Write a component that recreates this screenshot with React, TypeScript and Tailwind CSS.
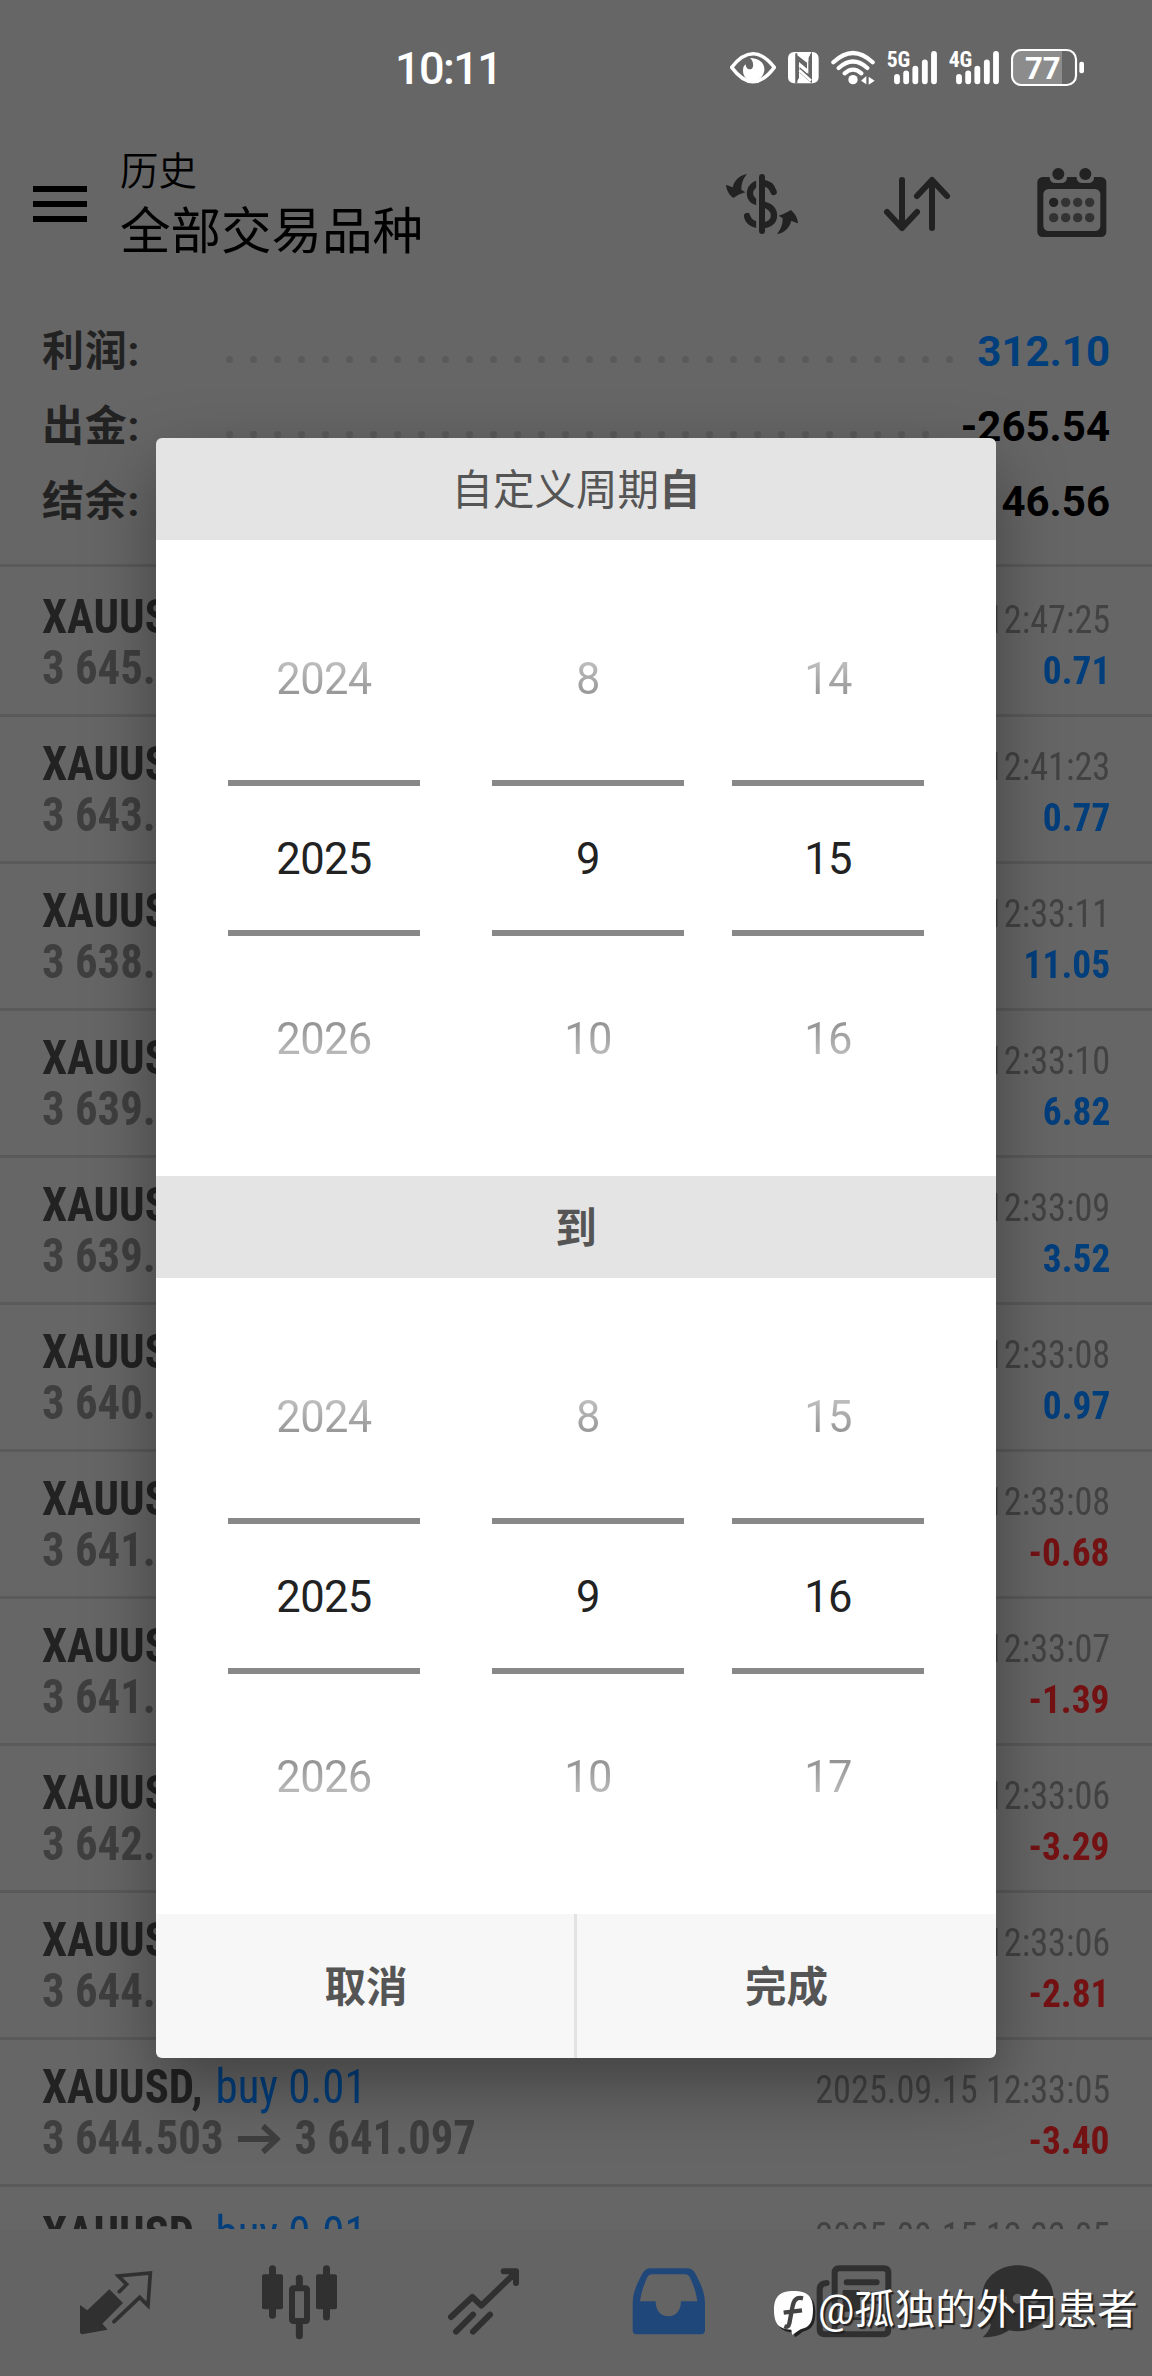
import type { ReactNode } from "react";

type Trade = { open: string; close: string; time: string; profit: string };

const trades: Trade[] = [
  { open: "3 645.104", close: "3 645.812", time: "2025.09.15 12:47:25", profit: "0.71" },
  { open: "3 643.208", close: "3 643.977", time: "2025.09.15 12:41:23", profit: "0.77" },
  { open: "3 638.150", close: "3 649.201", time: "2025.09.15 12:33:11", profit: "11.05" },
  { open: "3 639.012", close: "3 645.833", time: "2025.09.15 12:33:10", profit: "6.82" },
  { open: "3 639.510", close: "3 643.034", time: "2025.09.15 12:33:09", profit: "3.52" },
  { open: "3 640.118", close: "3 641.092", time: "2025.09.15 12:33:08", profit: "0.97" },
  { open: "3 641.775", close: "3 641.097", time: "2025.09.15 12:33:08", profit: "-0.68" },
  { open: "3 641.485", close: "3 641.097", time: "2025.09.15 12:33:07", profit: "-1.39" },
  { open: "3 642.385", close: "3 641.097", time: "2025.09.15 12:33:06", profit: "-3.29" },
  { open: "3 644.905", close: "3 641.097", time: "2025.09.15 12:33:06", profit: "-2.81" },
  { open: "3 644.503", close: "3 641.097", time: "2025.09.15 12:33:05", profit: "-3.40" },
  { open: "3 644.503", close: "3 641.097", time: "2025.09.15 12:33:05", profit: "-3.40" },
];

function Signal({ label }: { label: string }) {
  return (
    <svg width="50" height="41" viewBox="561 51 150 123" fill="none" stroke="#fff" strokeWidth="17.5" strokeLinecap="round">
      <text x="560" y="111" textLength="71" lengthAdjust="spacingAndGlyphs" fill="#fff" stroke="none" fontSize="66" fontWeight="700" fontFamily="Roboto Condensed, Roboto, sans-serif">
        {label}
      </text>
      <path d="M591 141V154M618.500 130V154M646 116V154M674.500 97V154M702 72V154" />
    </svg>
  );
}

function StatusBar() {
  return (
    <div className="flex h-[135px] items-center justify-between pr-[68px] pl-[395px] text-white">
      <span className="pt-[2px] text-[45px] leading-none font-medium tracking-[-1.6px]">10:11</span>
      <div className="flex items-center gap-3">
        <svg width="46" height="41" viewBox="90 51 138 123">
          <path d="M95 112Q159 31 223 112Q159 198 95 112Z" fill="none" stroke="#fff" strokeWidth="10.500" strokeLinejoin="round" />
          <path d="M150 84C180 84 195 102 193 121C191 140 176 152 159 152C142 152 129 140 129 122C129 113 131 107 137 103C137 112 143 119 151 118C162 116 163 96 150 84Z" fill="#fff" />
          <path d="M128 140Q159 166 190 140L176 158H142Z" fill="#fff" />
        </svg>
        <svg width="31" height="41" viewBox="265 51 93 123">
          <rect x="265" y="66" width="92" height="94" rx="18" fill="#fff" />
          <path d="M288 72L322 98V116L298 96V144L288 160ZM336 160L300 128V110L326 132V84L336 66Z" fill="#666" />
          <path d="M290 70V160M334 66V156" stroke="#666" strokeWidth="6" fill="none" />
          <path d="M299 105L324 126M299 121L334 152" stroke="#fff" strokeWidth="8" />
          <path d="M300 66H336L326 82V93Z" fill="#fff" />
        </svg>
        <svg width="44" height="41" viewBox="393 51 132 123" fill="none" stroke="#fff" strokeWidth="12.500" strokeLinecap="round">
          <path d="M400 97Q459 41 518 97M416 114Q459 75 502 114M434 130Q459 108 484 130" />
          <circle cx="459" cy="149" r="14" fill="#fff" stroke="none" />
          <path d="M483 152L499 138V163ZM524 152L506 140V164Z" fill="#fff" stroke="none" />
        </svg>
        <Signal label="5G" />
        <Signal label="4G" />
        <svg width="73" height="41" viewBox="933 51 219 123">
          <path d="M948 62H1086V163H960Q938 163 938 141V84Q938 62 960 62Z" fill="#8c8c8c" />
          <rect x="936" y="60" width="192" height="105" rx="28" fill="none" stroke="#fff" strokeWidth="6.500" />
          <rect x="1138" y="95" width="14" height="35" rx="6" fill="#fff" />
          <text x="975" y="147.500" textLength="107" lengthAdjust="spacingAndGlyphs" fill="#fff" fontSize="96" fontWeight="700" fontFamily="Roboto, sans-serif">
            77
          </text>
        </svg>
      </div>
    </div>
  );
}

function Header() {
  return (
    <header className="flex h-[138px] items-center pr-[40px] pl-[33px]">
      <div className="flex w-[54px] flex-col gap-[9px]">
        <div className="h-[6px] bg-black" />
        <div className="h-[6px] bg-black" />
        <div className="h-[6px] bg-black" />
      </div>
      <div className="mb-[4px] ml-[33px] text-black">
        <div className="text-[38.500px] leading-[60px] font-[350]">历史</div>
        <div className="text-[50.500px] leading-[60px]">全部交易品种</div>
      </div>
      <div className="ml-auto flex gap-[75px]">
        <svg width="80" height="80" viewBox="66 42 240 240" fill="none" stroke="#222" strokeWidth="18" strokeLinecap="round">
          <path d="M221 126C215 108 203 99 186 99C165 99 150 112 150 131C150 152 170 158 186 162C208 167 222 178 222 197C222 214 207 226 186 226C163 226 146 218 141 198" strokeWidth="19" />
          <path d="M173 80V246" stroke="#666" strokeWidth="9" strokeLinecap="butt" />
          <path d="M186 81V243" />
          <g fill="#222" stroke="none">
            <path d="M141 72C126 90 124 106 124 119L136 127C121 131 108 138 100 144C90 137 79 122 78 104C86 107 91 109 98 112C103 92 117 76 141 72Z" />
            <path transform="rotate(180 186 162)" d="M141 72C126 90 124 106 124 119L136 127C121 131 108 138 100 144C90 137 79 122 78 104C86 107 91 109 98 112C103 92 117 76 141 72Z" />
          </g>
        </svg>
        <svg width="80" height="80" viewBox="534 42 240 240" fill="none" stroke="#222" strokeWidth="18" strokeLinecap="round" strokeLinejoin="round">
          <path d="M609 90V234M564 186L609 234L654 186M699 234V90M654 138L699 90L744 138" />
        </svg>
        <svg width="80" height="80" viewBox="998 42 240 240">
          <rect x="1014" y="81" width="207" height="180" rx="16" fill="#222" />
          <rect x="1032" y="117" width="171" height="126" rx="16" fill="#666" />
          <rect x="1051" y="60" width="52" height="39" rx="16" fill="#666" />
          <rect x="1132" y="60" width="52" height="39" rx="16" fill="#666" />
          <g fill="#222">
            <circle cx="1077" cy="72" r="18" />
            <circle cx="1158" cy="72" r="18" />
            <circle cx="1063" cy="157" r="14" />
          </g>
          <g fill="#333">
            <circle cx="1099" cy="157" r="14" />
            <circle cx="1135" cy="157" r="14" />
            <circle cx="1171" cy="157" r="14" />
            <circle cx="1063" cy="203" r="14" />
            <circle cx="1099" cy="203" r="14" />
            <circle cx="1135" cy="203" r="14" />
            <circle cx="1171" cy="203" r="14" />
          </g>
        </svg>
      </div>
    </header>
  );
}

function SummaryRow({ label, value, dots, blue }: { label: string; value: string; dots: number; blue?: boolean }) {
  return (
    <div className="flex h-[75px] items-center">
      <span className="w-[184px] pt-[3px] text-[42px] leading-[60px] font-bold tracking-[0.8px] text-[#222]">{label}</span>
      <div className="flex gap-[17px] pt-[17px]">
        {Array.from({ length: dots }, (_, i) => (
          <i key={i} className="size-[7px] rounded-full bg-[#5a5a5a]" />
        ))}
      </div>
      <span className={blue ? "ml-auto pt-[2px] text-[42px] leading-[60px] font-bold text-[#003e7c]" : "ml-auto pt-[2px] text-[42px] leading-[60px] font-bold text-black"}>
        {value}
      </span>
    </div>
  );
}

function TradeRow({ trade }: { trade: Trade }) {
  const loss = trade.profit.startsWith("-");
  return (
    <div className="h-[147px] shrink-0 border-b-[3px] border-[#5a5a5a] px-[42px] pt-[21px] font-['Roboto_Condensed',Roboto,sans-serif] whitespace-nowrap">
      <div className="flex h-[51px] items-baseline justify-between leading-[51px]">
        <div className="flex origin-left scale-x-[0.934] gap-[14px] text-[48px]">
          <span className="font-bold text-[#222]">XAUUSD,</span>
          <span className="text-[#003e7c]">buy 0.01</span>
        </div>
        <div className="origin-right scale-x-[0.93] text-[39px] text-[#424242]">{trade.time}</div>
      </div>
      <div className="flex h-[51px] items-baseline justify-between leading-[51px]">
        <div className="flex origin-left scale-x-[0.932] items-baseline gap-[15px] text-[48px] font-bold text-[#3f3f3f]">
          <span>{trade.open}</span>
          <svg width="46" height="30" viewBox="0 0 46 30" fill="none" stroke="#3f3f3f" strokeWidth="6">
            <path d="M0 15H42M27 2L42 15L27 28" />
          </svg>
          <span>{trade.close}</span>
        </div>
        <div className={loss ? "origin-right scale-x-[0.96] text-[39px] font-bold text-[#741113]" : "origin-right scale-x-[0.96] text-[39px] font-bold text-[#003e7c]"}>
          {trade.profit}
        </div>
      </div>
    </div>
  );
}

function NavIcon({ box, children, last }: { box: string; children: ReactNode; last?: boolean }) {
  return (
    <div className={last ? "flex w-[148px] items-center justify-center" : "flex w-[184px] items-center justify-center"}>
      <svg width="80" height="80" viewBox={box} fill="none" strokeLinecap="round" strokeLinejoin="round">
        {children}
      </svg>
    </div>
  );
}

function BottomNav() {
  return (
    <nav className="flex h-[147px] shrink-0 bg-[#646464] px-6">
      <NavIcon box="48 38 240 240">
        <path d="M60 164L82 180L148 117L189 158L127 220L143 238L66 252Q60 251 60 246Z" fill="#303030" />
        <path d="M178 124L200 102L175 77L271 68L264 166L239 141L162 214" stroke="#303030" strokeWidth="11" strokeLinejoin="miter" />
      </NavIcon>
      <NavIcon box="600 38 240 240">
        <path d="M637.500 55V195M799.500 55V200M718 84V110M718 215V256" stroke="#303030" strokeWidth="21" />
        <rect x="606" y="72" width="63" height="105" rx="6" fill="#303030" />
        <rect x="768" y="72" width="63" height="105" rx="6" fill="#303030" />
        <rect x="696" y="114" width="45" height="98" rx="4" stroke="#303030" strokeWidth="18" />
      </NavIcon>
      <NavIcon box="1152 38 240 240">
        <path d="M1173 200L1237 140L1264 166L1368 65M1331 63H1368V98M1188 244L1239 193M1239 244L1290 193" stroke="#303030" strokeWidth="18" />
      </NavIcon>
      <NavIcon box="24 38 240 240">
        <path
          fillRule="evenodd"
          fill="#20477a"
          d="M92 54H200Q218 54 225 68C245 105 255 130 255 160V240Q255 252 243 252H50Q38 252 38 240V160C38 130 48 105 68 68Q76 54 92 54ZM95 72Q86 72 82 80C72 102 64 125 60 153H107C107 180 122 198 145 198C168 198 183 180 183 153H232C228 125 220 102 209 80Q205 72 196 72Z"
        />
      </NavIcon>
      <NavIcon box="576 38 240 240">
        <path d="M620 98Q599 99 599 118V236Q599 252 615 252H790Q805 252 805 237V68Q805 54 791 54H658Q644 54 644 68V236Q644 252 628 252M680 96H770" stroke="#303030" strokeWidth="18" />
        <path d="M672 123H716V180H672ZM738 128H778M738 156H778M672 205H778" fill="#303030" stroke="#303030" strokeWidth="8" />
      </NavIcon>
      <NavIcon box="1074 38 240 240" last>
        <path d="M1193 45C1254 45 1301 88 1301 144C1301 200 1254 243 1193 243C1184 243 1176 242 1168 240C1145 254 1118 262 1088 261C1100 250 1109 238 1113 223C1095 204 1085 176 1085 144C1085 88 1132 45 1193 45Z" fill="#303030" />
        <circle cx="1145" cy="145" r="15" fill="#646464" />
        <circle cx="1193" cy="145" r="15" fill="#646464" />
        <circle cx="1241" cy="145" r="15" fill="#646464" />
      </NavIcon>
    </nav>
  );
}

function Wheel({ values }: { values: [string, string, string] }) {
  return (
    <div className="w-[192px] py-[48px] text-center text-[43.500px] leading-[64px] tracking-[-0.6px]">
      <div className="flex h-[180px] items-center justify-center pt-[4px]">
        <span className="bg-gradient-to-b from-[#cfcfcf] to-[#838383] bg-clip-text px-2 text-transparent">{values[0]}</span>
      </div>
      <div className="flex h-[180px] items-center">
        <div className="flex h-[156px] w-full items-center justify-center border-y-[6px] border-[#888] pt-[4px] text-[#222]">{values[1]}</div>
      </div>
      <div className="flex h-[180px] items-center justify-center pt-[4px]">
        <span className="bg-gradient-to-b from-[#838383] to-[#cfcfcf] bg-clip-text px-2 text-transparent">{values[2]}</span>
      </div>
    </div>
  );
}

function DatePicker({ years, months, days }: { years: [string, string, string]; months: [string, string, string]; days: [string, string, string] }) {
  return (
    <div className="flex h-[636px] justify-between bg-white px-[72px]">
      <Wheel values={years} />
      <div className="ml-6">
        <Wheel values={months} />
      </div>
      <Wheel values={days} />
    </div>
  );
}

function PeriodDialog() {
  return (
    <div className="absolute top-[438px] left-[156px] w-[840px] overflow-hidden rounded-[6px] text-[#555] shadow-[0_28px_70px_rgba(0,0,0,0.36)]">
      <div className="flex h-[102px] items-center justify-center bg-[#e4e4e4] pt-[4px] text-[41.500px]">
        <span>自定义周期</span>
        <b>自</b>
      </div>
      <DatePicker years={["2024", "2025", "2026"]} months={["8", "9", "10"]} days={["14", "15", "16"]} />
      <div className="flex h-[102px] items-center justify-center bg-[#e4e4e4] pt-[4px] text-[41.500px] font-bold">到</div>
      <DatePicker years={["2024", "2025", "2026"]} months={["8", "9", "10"]} days={["15", "16", "17"]} />
      <div className="flex h-[144px] bg-[#f7f7f7] text-[41.500px] font-bold">
        <div className="flex w-[421px] items-center justify-center border-r-[3px] border-[#e2e2e2] pt-[5px] pl-[2px]">取消</div>
        <div className="flex w-[419px] items-center justify-center pt-[5px]">完成</div>
      </div>
    </div>
  );
}

function Watermark() {
  return (
    <div className="absolute top-[2278px] left-[774px] flex h-[60px] items-center whitespace-nowrap text-white">
      <svg width="44" height="50" viewBox="460 122 132 150" className="-ml-px mt-[13px]">
        <path d="M526 128C562 128 582 142 583 182C584 222 572 238 545 243Q534 252 522 260Q519 252 519 245C482 244 466 230 466 187C466 144 485 128 526 128Z" fill="#222" transform="translate(4 4)" />
        <path d="M522 125C560 125 580 138 580 180C580 220 570 234 543 240Q530 248 518 257Q516 250 515 241C480 240 463 226 463 183C463 140 482 125 522 125Z" fill="#fff" />
        <path d="M550 147C529 142 522 153 518 175L509 222Q506 236 494 231M492 190L547 183" fill="none" stroke="#444" strokeWidth="13" />
      </svg>
      <span className="ml-[1px] pt-[5px] text-[40.500px] [text-shadow:2px_2px_1px_#222]">@孤独的外向患者</span>
    </div>
  );
}

export default function App() {
  return (
    <div className="relative flex h-[2376px] w-[1152px] flex-col overflow-hidden bg-[#666] font-[Roboto,'Noto_Sans_CJK_SC',sans-serif]">
      <StatusBar />
      <Header />
      <section className="mb-[3px] h-[294px] shrink-0 border-b-[3px] border-[#5a5a5a] px-[42px] pt-[40px]">
        <SummaryRow label="利润:" value="312.10" dots={31} blue />
        <SummaryRow label="出金:" value="-265.54" dots={30} />
        <SummaryRow label="结余:" value="46.56" dots={30} />
      </section>
      <main className="flex min-h-0 flex-1 flex-col overflow-hidden">
        {trades.map((trade, i) => (
          <TradeRow key={i} trade={trade} />
        ))}
      </main>
      <BottomNav />
      <PeriodDialog />
      <Watermark />
    </div>
  );
}
